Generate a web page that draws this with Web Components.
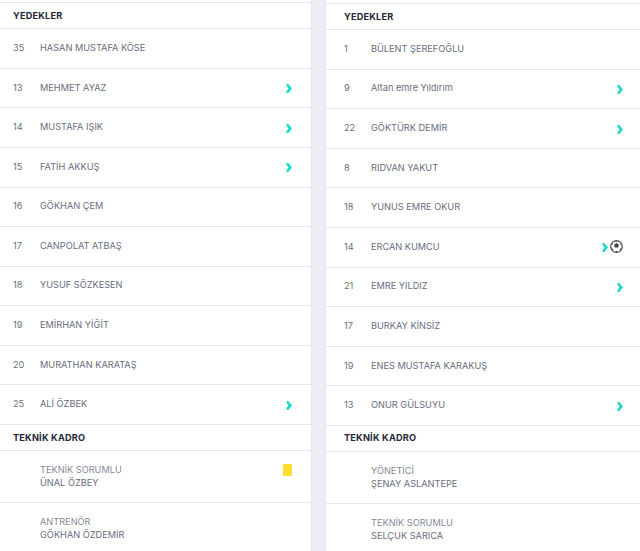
<!DOCTYPE html>
<html lang="tr"><head><meta charset="utf-8"><title>Kadro</title>
<style>
html,body{margin:0;padding:0;background:#fff}
body{height:551px;overflow:hidden;font-family:Inter,"Liberation Sans",sans-serif}
</style></head><body>
<template id="t-board"><style>
:host{display:grid;grid-template-columns:311px 15px 314px;height:551px;overflow:hidden;background:#fff}
.gap{background:#ecedf3;height:551px;box-sizing:border-box;border-left:1px solid #e4e5ed;border-right:1px solid #e4e5ed}
</style><slot name="left"></slot><div class="gap"></div><slot name="right"></slot></template>
<template id="t-col"><style>
:host{display:block;height:551px;overflow:hidden;box-sizing:border-box;border-top:1px solid #e6e7ee}
</style><slot></slot></template>
<template id="t-head"><style>
:host{display:flex;align-items:center;box-sizing:border-box;height:var(--head-h,26px);padding:0 var(--pad-r) 0 var(--pad-l);border-bottom:1px solid #e6e7ee;font:700 9.2px/12px Inter,sans-serif;color:#1f2937;letter-spacing:.2px}
</style><slot></slot></template>
<template id="t-row"><style>
:host{display:flex;align-items:center;box-sizing:border-box;height:39.58px;padding:0 var(--pad-r) 1px var(--pad-l);border-bottom:1px solid #e6e7ee;font:400 9.2px/12px Inter,sans-serif;color:#686d7d}
.n{width:27px;flex:none;color:#6d6f78}
.m{flex:1;white-space:nowrap}
.i{display:flex;align-items:center;gap:3px;position:relative;top:1px}
</style><span class="n"><slot name="no"></slot></span><span class="m"><slot></slot></span><span class="i"><slot name="icon"></slot></span></template>
<template id="t-staff"><style>
:host{display:flex;box-sizing:border-box;height:52px;padding:12px var(--pad-r) 0 calc(var(--pad-l) + 27px);border-bottom:1px solid #e6e7ee;font:400 9.2px/13px Inter,sans-serif;color:#686d7d}
:host(:last-child){border-bottom:0}
.m{flex:1;white-space:nowrap}
.r{display:block;color:#858996}
</style><div class="m"><span class="r"><slot name="role"></slot></span><slot></slot></div><slot name="icon"></slot></template>
<template id="t-chev"><style>:host{display:block;width:6px;height:9px}svg{display:block}</style><svg width="6" height="9" viewBox="0 0 6 9"><path d="M2.2 0 6 4.5 2.2 9H.4L.9 6.6 2.6 4.5 .9 2.4 .4 0Z" fill="#14d8c6"/></svg></template>
<template id="t-ball"><style>:host{display:block;width:13px;height:13px;position:relative;top:-1px;margin-left:-1px}svg{display:block}</style><svg width="13" height="13" viewBox="0 0 13 13"><circle cx="6.5" cy="6.5" r="5.9" fill="#fff" stroke="#565a60" stroke-width="1.1"/><path d="M6.5 3.1 9 4.9 8.1 7.6H4.9L4 4.9Z" fill="#3f4348"/><path d="M1 6.8 2.4 8.2 3.5 11 1.9 10.2ZM12 6.8 10.6 8.2 9.5 11 11.1 10.2ZM4.8 12 6.5 10.8 8.2 12 6.5 12.5Z" fill="#3f4348"/><path d="M4.4 .9 8.6 .9 6.5 2.2ZM1.4 4 3.1 2.3 2.9 4.6 1.1 6ZM11.6 4 9.9 2.3 10.1 4.6 11.9 6Z" fill="#6a6e74"/></svg></template>
<template id="t-card"><style>:host{display:block;width:9px;height:12px;background:#ffde2e;border-radius:1px;margin-top:1px}</style></template>
<squad-board>
<squad-col slot="left" style="margin-top:2px;--head-h:26.2px;--pad-l:13px;--pad-r:19px">
<squad-head>YEDEKLER</squad-head>
<squad-row><span slot="no">35</span>HASAN MUSTAFA KÖSE</squad-row>
<squad-row><span slot="no">13</span>MEHMET AYAZ<sub-chev slot="icon"></sub-chev></squad-row>
<squad-row><span slot="no">14</span>MUSTAFA IŞIK<sub-chev slot="icon"></sub-chev></squad-row>
<squad-row><span slot="no">15</span>FATİH AKKUŞ<sub-chev slot="icon"></sub-chev></squad-row>
<squad-row><span slot="no">16</span>GÖKHAN ÇEM</squad-row>
<squad-row><span slot="no">17</span>CANPOLAT ATBAŞ</squad-row>
<squad-row><span slot="no">18</span>YUSUF SÖZKESEN</squad-row>
<squad-row><span slot="no">19</span>EMİRHAN YİĞİT</squad-row>
<squad-row><span slot="no">20</span>MURATHAN KARATAŞ</squad-row>
<squad-row><span slot="no">25</span>ALİ ÖZBEK<sub-chev slot="icon"></sub-chev></squad-row>
<squad-head>TEKNİK KADRO</squad-head>
<squad-staff><span slot="role">TEKNİK SORUMLU</span>ÜNAL ÖZBEY<yellow-card slot="icon"></yellow-card></squad-staff>
<squad-staff><span slot="role">ANTRENÖR</span>GÖKHAN ÖZDEMİR</squad-staff>
</squad-col>
<squad-col slot="right" style="margin-top:3px;--head-h:26.1px;--pad-l:18px;--pad-r:17px">
<squad-head>YEDEKLER</squad-head>
<squad-row><span slot="no">1</span>BÜLENT ŞEREFOĞLU</squad-row>
<squad-row><span slot="no">9</span>Altan emre Yıldırım<sub-chev slot="icon"></sub-chev></squad-row>
<squad-row><span slot="no">22</span>GÖKTÜRK DEMİR<sub-chev slot="icon"></sub-chev></squad-row>
<squad-row><span slot="no">8</span>RIDVAN YAKUT</squad-row>
<squad-row><span slot="no">18</span>YUNUS EMRE OKUR</squad-row>
<squad-row><span slot="no">14</span>ERCAN KUMCU<sub-chev slot="icon"></sub-chev><soccer-ball slot="icon"></soccer-ball></squad-row>
<squad-row><span slot="no">21</span>EMRE YILDIZ<sub-chev slot="icon"></sub-chev></squad-row>
<squad-row><span slot="no">17</span>BURKAY KİNSİZ</squad-row>
<squad-row><span slot="no">19</span>ENES MUSTAFA KARAKUŞ</squad-row>
<squad-row><span slot="no">13</span>ONUR GÜLSUYU<sub-chev slot="icon"></sub-chev></squad-row>
<squad-head>TEKNİK KADRO</squad-head>
<squad-staff><span slot="role">YÖNETİCİ</span>ŞENAY ASLANTEPE</squad-staff>
<squad-staff><span slot="role">TEKNİK SORUMLU</span>SELÇUK SARICA</squad-staff>
</squad-col>
</squad-board>
<script>
const reg=(n,t)=>customElements.define(n,class extends HTMLElement{constructor(){super();this.attachShadow({mode:'open'}).appendChild(document.getElementById(t).content.cloneNode(true))}});
reg('squad-board','t-board');reg('squad-col','t-col');reg('squad-head','t-head');reg('squad-row','t-row');reg('squad-staff','t-staff');reg('sub-chev','t-chev');reg('soccer-ball','t-ball');reg('yellow-card','t-card');
</script>
</body></html>
